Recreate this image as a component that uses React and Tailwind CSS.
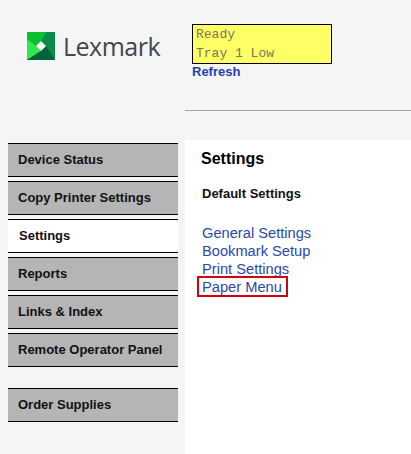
const sans = "font-['Liberation_Sans',Arial,sans-serif]";

function NavItem({ label, active, className = "" }) {
  return (
    <div
      className={`h-[34px] pb-[1px] border-y-[1.5px] border-black flex items-center text-[13px] font-bold text-[#111] ${
        active ? "bg-white pl-[11px]" : "bg-[#b5b5b5] pl-[10px]"
      } ${className}`}
    >
      {label}
    </div>
  );
}

function Logo() {
  return (
    <div className="flex items-center gap-[8px]">
      <svg width="28" height="28" viewBox="0 0 28 28" className="block">
        <rect width="28" height="28" fill="#0a8a4c" />
        <polygon points="0,0 20,0 14,9 9,14 0,7" fill="#0bc02f" />
        <polygon points="0,7 9,14 14,19 0,28" fill="#2fe84a" />
        <polygon points="20,0 28,0 28,28 19,14 14,9" fill="#0a8a4c" />
        <polygon points="0,28 14,19 19,14 28,28" fill="#05603f" />
        <polygon points="14,9 19,14 14,19 9,14" fill="#f2fbf2" />
      </svg>
      <span className="font-['Open_Sans',sans-serif] text-[25px] leading-none tracking-[-0.5px] text-[#44464f]">
        Lexmark
      </span>
    </div>
  );
}

export default function App() {
  return (
    <div className={`w-[411px] h-[454px] bg-[#f5f5f5] overflow-hidden flex flex-col ${sans}`}>
      <header className="h-[140px] flex shrink-0">
        <div className="w-[185px] pl-[27px] pt-[32px]">
          <Logo />
        </div>
        <div className="flex-1 flex flex-col">
          <div className="h-[111px] border-b border-[#a0a0a0] pl-[7px] pt-[24px]">
            <div className="w-[140px] h-[40px] bg-[#ffff66] border border-black pl-[3px] font-['Liberation_Mono',monospace] text-[13px] leading-[19px] text-[#777755]">
              <div>Ready</div>
              <div>Tray 1 Low</div>
            </div>
            <div className="text-[13px] leading-[15px] font-bold text-[#1f3fb0]">Refresh</div>
          </div>
        </div>
      </header>
      <div className="flex flex-1">
        <nav className="w-[185px] pl-[8px] pr-[7px] pt-[3px] flex flex-col gap-[4px]">
          <NavItem label="Device Status" />
          <NavItem label="Copy Printer Settings" />
          <NavItem label="Settings" active />
          <NavItem label="Reports" />
          <NavItem label="Links & Index" />
          <NavItem label="Remote Operator Panel" />
          <NavItem label="Order Supplies" className="mt-[17px]" />
        </nav>
        <main className="flex-1 bg-white pl-[16px] pt-[10px]">
          <h1 className="text-[16px] leading-[18px] font-bold text-black">Settings</h1>
          <h2 className="mt-[18px] pl-[1px] text-[13px] leading-[16px] font-bold text-[#111]">
            Default Settings
          </h2>
          <ul className="mt-[22px] pl-[1px] text-[14.67px] leading-[18px] text-[#2a48ac]">
            <li>General Settings</li>
            <li>Bookmark Setup</li>
            <li>Print Settings</li>
            <li>
              <span className="relative inline-block">
                Paper Menu
                <span className="absolute left-[-5px] right-[-6px] top-[-2px] bottom-[-1px] border-2 border-[#d4000f]" />
              </span>
            </li>
          </ul>
        </main>
      </div>
    </div>
  );
}
